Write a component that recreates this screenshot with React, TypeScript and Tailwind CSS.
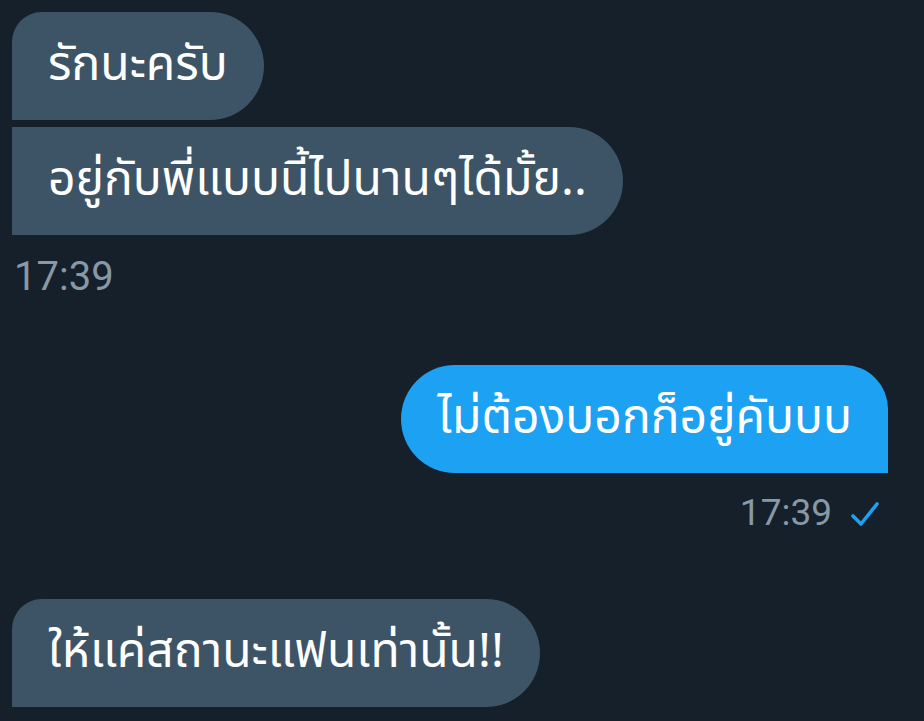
// App.tsx - DM conversation thread (dark theme)

const THAI_FONT = "font-['Noto_Sans_Thai','Noto_Sans','Roboto',sans-serif]";

function CheckIcon() {
  return (
    <svg width="30" height="26" viewBox="0 0 30 26" fill="none" className="ml-[18px] mr-[8px] mt-[6px]">
      <path d="M3 15 L11 23 L27 3" stroke="#1da1f2" strokeWidth="3.6" strokeLinecap="round" strokeLinejoin="round" />
    </svg>
  );
}

export default function App() {
  return (
    <div className="w-[924px] h-[721px] overflow-hidden bg-[#15202b] flex flex-col px-[12px] pt-[12px]">
      {/* Received group */}
      <div className="flex flex-col items-start gap-[7px]">
        <div
          className={`${THAI_FONT} bg-[#3d5466] text-white text-[48px] leading-[60px] py-[24px] px-[36px] rounded-tl-[30px] rounded-tr-[54px] rounded-br-[54px] rounded-bl-none`}
        >
          รักนะครับ
        </div>
        <div
          className={`${THAI_FONT} bg-[#3d5466] text-white text-[48px] leading-[60px] py-[24px] px-[36px] rounded-r-[54px] rounded-l-none`}
        >
          อยู่กับพี่แบบนี้ไปนานๆได้มั้ย..
        </div>
      </div>
      <div className="font-['Roboto',sans-serif] text-[#8899a6] text-[40px] leading-[40px] mt-[22px] ml-[2px]">17:39</div>

      {/* Sent */}
      <div className="flex flex-col items-end pr-[24px] mt-[68px]">
        <div
          className={`${THAI_FONT} bg-[#1da1f2] text-white text-[48px] leading-[60px] py-[24px] px-[36px] rounded-l-[54px] rounded-tr-[44px] rounded-br-none`}
        >
          ไม่ต้องบอกก็อยู่คับบบ
        </div>
        <div className="flex items-start mt-[22px]">
          <span className="font-['Roboto',sans-serif] text-[#8899a6] text-[37px] leading-[36px]">17:39</span>
          <CheckIcon />
        </div>
      </div>

      {/* Received */}
      <div className="flex flex-col items-start mt-[68px]">
        <div
          className={`${THAI_FONT} bg-[#3d5466] text-white text-[48px] leading-[60px] py-[24px] px-[36px] rounded-tl-[30px] rounded-tr-[54px] rounded-br-[54px] rounded-bl-none`}
        >
          ให้แค่สถานะแฟนเท่านั้น!!
        </div>
      </div>
    </div>
  );
}
